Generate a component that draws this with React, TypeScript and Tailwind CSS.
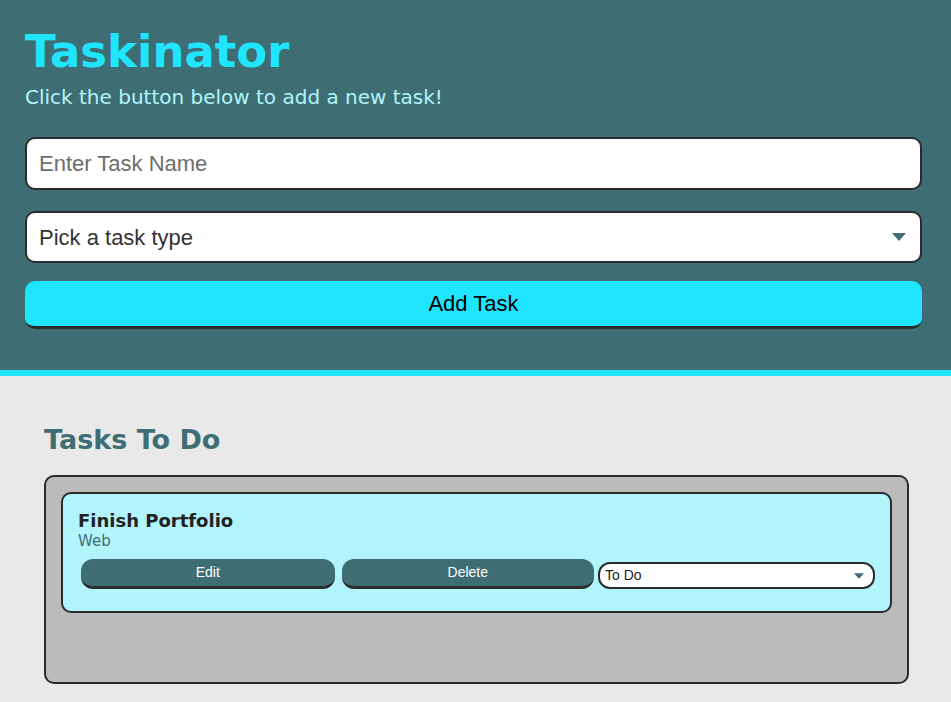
import { useState } from "react";

function Caret({ className }: { className?: string }) {
  return (
    <svg viewBox="0 0 14 8" className={className}>
      <path d="M0 0h14L7 8z" fill="#3e6e73" />
    </svg>
  );
}

export default function App() {
  const [taskName, setTaskName] = useState("");

  return (
    <div className="min-h-[702px] bg-[#e9e9e9]">
      <header className="bg-[#3e6e73] border-b-[6px] border-[#1fe6fe] px-[25px] pr-[29px] pt-[26px] pb-[41px]">
        <h1 className="text-[45px] leading-[52px] font-bold text-[#1fe6fe] font-['DejaVu_Sans',Verdana,sans-serif]">
          Taskinator
        </h1>
        <p className="mt-[7px] text-[20px] leading-[24px] text-[#b2f4fc] font-['DejaVu_Sans',Verdana,sans-serif]">
          Click the button below to add a new task!
        </p>

        <form className="mt-[28px] flex flex-col font-['Liberation_Sans',Arial,sans-serif]" onSubmit={(e) => e.preventDefault()}>
          <input
            value={taskName}
            onChange={(e) => setTaskName(e.target.value)}
            placeholder="Enter Task Name"
            className="h-[53px] w-full rounded-[10px] border-2 border-[#2b2b2b] bg-white px-[12px] text-[22px] text-[#333] placeholder:text-[#6d6d6d] outline-none"
          />
          <div className="relative mt-[21px]">
            <select className="h-[52px] w-full appearance-none rounded-[10px] border-2 border-[#2b2b2b] bg-white px-[12px] text-[22px] text-[#333] outline-none">
              <option>Pick a task type</option>
              <option>Web</option>
              <option>Mobile</option>
              <option>Print</option>
            </select>
            <Caret className="pointer-events-none absolute right-[16px] top-[22px] w-[14px] h-[8px]" />
          </div>
          <button
            type="submit"
            className="mt-[18px] h-[48px] w-full rounded-[10px] border-b-[3px] border-[#2b2b2b] bg-[#1fe6fe] text-[22px] text-black"
          >
            Add Task
          </button>
        </form>
      </header>

      <main className="px-[44px] pr-[42px] pt-[48px]">
        <h2 className="text-[27px] leading-[32px] font-bold text-[#3e6e73] font-['DejaVu_Sans',Verdana,sans-serif]">
          Tasks To Do
        </h2>

        <ul className="mt-[19px] h-[209px] rounded-[10px] border-2 border-[#2b2b2b] bg-[#bbbbbb] p-[15px]">
          <li className="h-[121px] rounded-[10px] border-2 border-[#2b2b2b] bg-[#b2f4fc] px-[15px] pt-[16px]">
            <h3 className="text-[18px] leading-[22px] font-bold text-[#222] font-['DejaVu_Sans',Verdana,sans-serif]">
              Finish Portfolio
            </h3>
            <span className="block text-[15px] leading-[18px] text-[#3e6e73] font-['DejaVu_Sans',Verdana,sans-serif]">
              Web
            </span>
            <div className="mt-[9px] ml-[3px] flex items-start font-['Liberation_Sans',Arial,sans-serif]">
              <button className="h-[30px] w-[254px] rounded-[12px] border-b-[3px] border-[#2b2b2b] bg-[#3e6e73] text-[14px] text-white">
                Edit
              </button>
              <button className="ml-[7px] h-[30px] w-[253px] rounded-[12px] border-b-[3px] border-[#2b2b2b] bg-[#3e6e73] text-[14px] text-white">
                Delete
              </button>
              <div className="relative ml-[4px] mt-[3px]">
                <select className="h-[27px] w-[277px] appearance-none rounded-[12px] border-2 border-[#2b2b2b] bg-white pl-[5px] text-[14px] text-[#222] outline-none">
                  <option>To Do</option>
                  <option>In Progress</option>
                  <option>Done</option>
                </select>
                <Caret className="pointer-events-none absolute right-[11px] top-[11px] w-[10px] h-[6px]" />
              </div>
            </div>
          </li>
        </ul>
      </main>
    </div>
  );
}
